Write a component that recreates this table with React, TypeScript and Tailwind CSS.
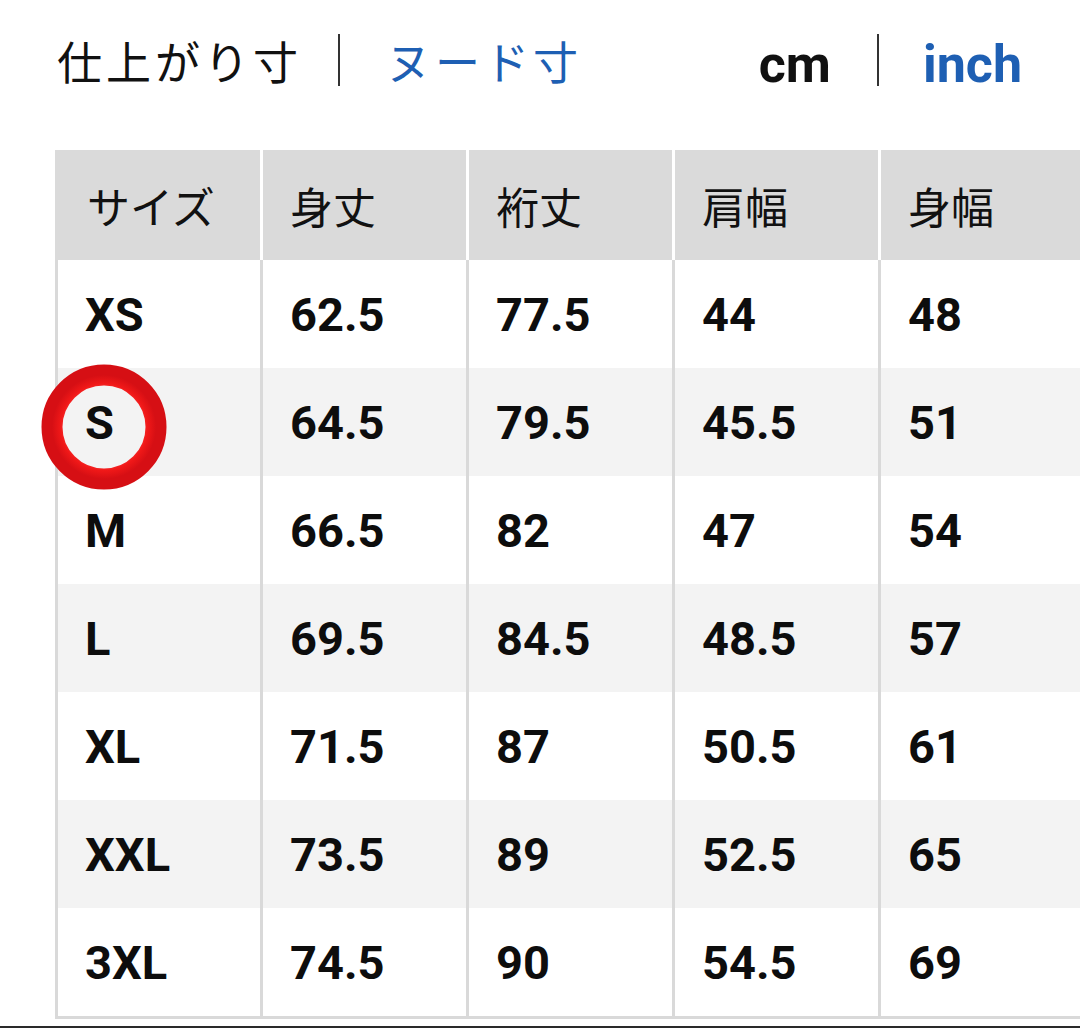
import React from "react";

const rows: string[][] = [
  ["XS", "62.5", "77.5", "44", "48"],
  ["S", "64.5", "79.5", "45.5", "51"],
  ["M", "66.5", "82", "47", "54"],
  ["L", "69.5", "84.5", "48.5", "57"],
  ["XL", "71.5", "87", "50.5", "61"],
  ["XXL", "73.5", "89", "52.5", "65"],
  ["3XL", "74.5", "90", "54.5", "69"],
];

const headers = ["サイズ", "身丈", "裄丈", "肩幅", "身幅"];

export default function App() {
  return (
    <div className="relative w-[1080px] h-[1028px] overflow-hidden bg-white">
      {/* top bar */}
      <div className="flex h-[120px] items-center justify-between pl-[57px] pr-[58px]">
        <div
          className="flex items-center text-[45px] leading-none"
          style={{ fontFamily: '"Noto Sans CJK JP", "Noto Sans", sans-serif' }}
        >
          <span className="tracking-[4px] text-[#111]">仕上がり寸</span>
          <span className="ml-[36px] mr-[46px] h-[52px] w-[2px] bg-[#333]" />
          <span className="tracking-[4px] text-[#1e5fb3]">ヌード寸</span>
        </div>
        <div
          className="flex items-center text-[52px] font-bold leading-none"
          style={{ fontFamily: 'Roboto, "Liberation Sans", sans-serif' }}
        >
          <span className="mt-[10px] text-[#111]">cm</span>
          <span className="ml-[46px] mr-[44px] h-[52px] w-[2px] bg-[#333]" />
          <span className="mt-[10px] text-[#1e5fb3]">inch</span>
        </div>
      </div>

      {/* table */}
      <div className="mt-[30px] ml-[55px] w-[1100px]">
        <div
          className="flex h-[110px] bg-[#dadada] text-[43px] leading-none text-[#111]"
          style={{ fontFamily: '"Noto Sans CJK JP", "Noto Sans", sans-serif' }}
        >
          {headers.map((h, i) => (
            <div
              key={h}
              className={
                i === 0
                  ? "flex w-[205px] shrink-0 items-center pl-[32px]"
                  : "flex w-[206px] shrink-0 items-center border-l-[3px] border-white pl-[27px]"
              }
            >
              {h}
            </div>
          ))}
        </div>
        <div
          className="border-b-[3px] border-l-[3px] border-[#d9d9d9] text-[47px] font-bold leading-none text-[#0d0d0d]"
          style={{ fontFamily: 'Roboto, "Liberation Sans", sans-serif' }}
        >
          {rows.map((r, ri) => (
            <div
              key={r[0]}
              className={
                ri % 2 === 1
                  ? "flex h-[108px] bg-[#f3f3f3]"
                  : "flex h-[108px] bg-white"
              }
            >
              {r.map((c, ci) => (
                <div
                  key={ci}
                  className={
                    ci === 0
                      ? "flex w-[202px] shrink-0 items-center pl-[27px]"
                      : "flex w-[206px] shrink-0 items-center border-l-[3px] border-[#d9d9d9] pl-[27px]"
                  }
                >
                  {c}
                </div>
              ))}
            </div>
          ))}
        </div>
      </div>

      {/* bottom line */}
      <div className="mt-[7px] h-[2px] w-full bg-[#2a2a2a]" />

      {/* red circle annotation */}
      <svg
        className="absolute left-[41px] top-[364px]"
        width="126"
        height="126"
        viewBox="0 0 126 126"
      >
        <defs>
          <radialGradient id="ring" cx="50%" cy="50%" r="50%">
            <stop offset="68%" stopColor="#ff3a3a" />
            <stop offset="84%" stopColor="#f01818" />
            <stop offset="100%" stopColor="#d60f14" />
          </radialGradient>
        </defs>
        <circle cx="63" cy="63" r="52" fill="none" stroke="url(#ring)" strokeWidth="21" />
      </svg>
    </div>
  );
}
